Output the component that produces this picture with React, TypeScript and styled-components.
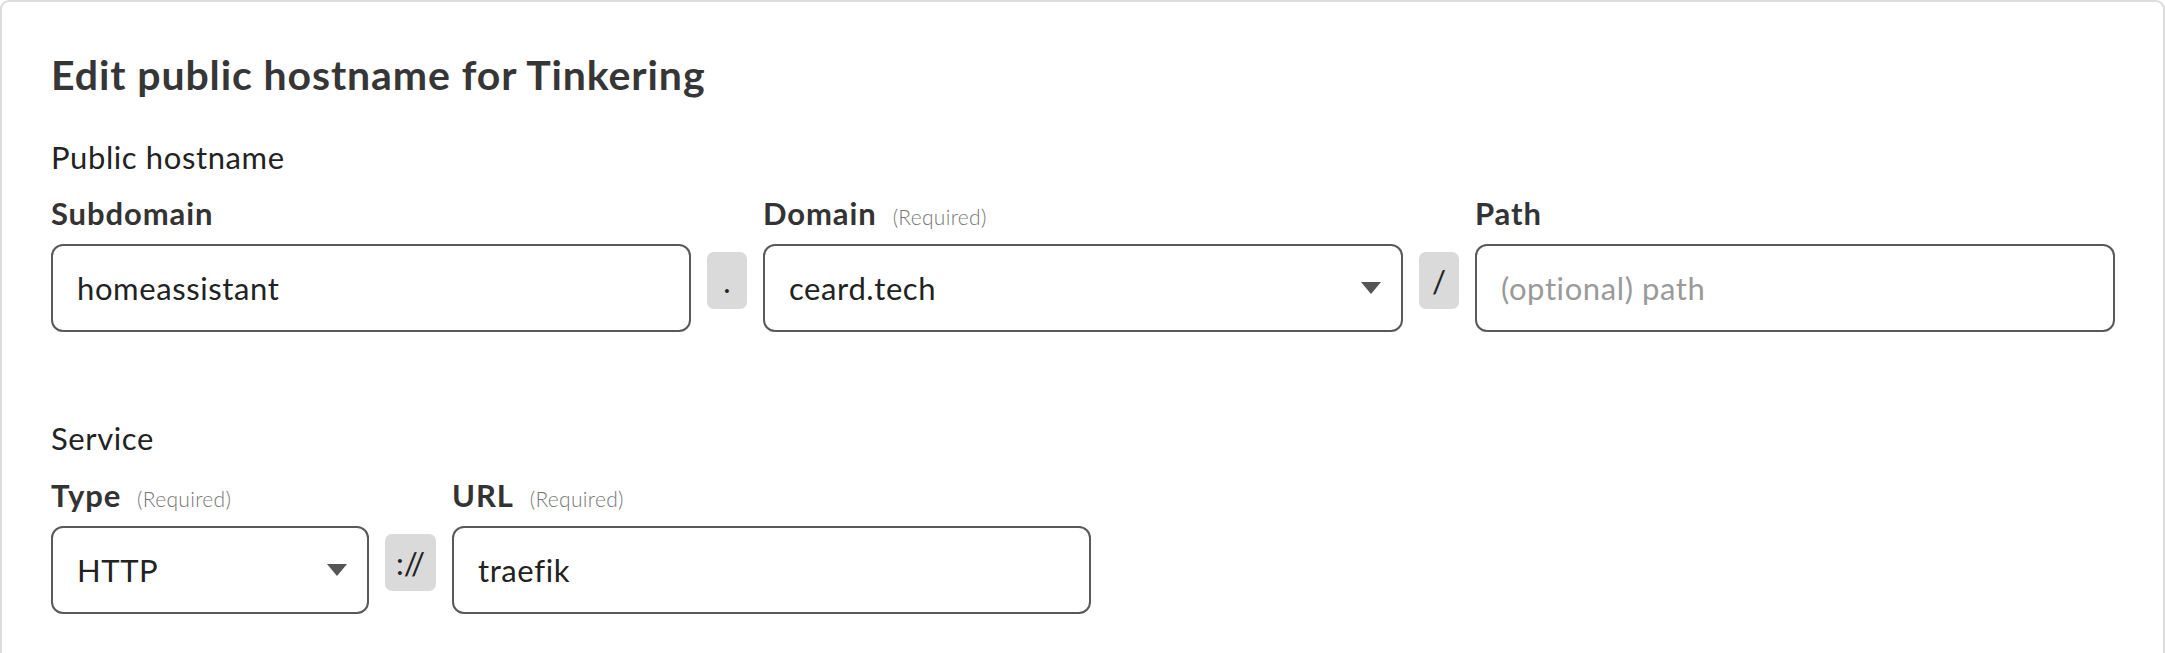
import * as React from "react";
import styled, { createGlobalStyle } from "styled-components";

const GlobalStyle = createGlobalStyle`
  html, body {
    margin: 0;
    padding: 0;
    background: #ffffff;
  }
  body {
    font-family: Lato, "Open Sans", "Liberation Sans", sans-serif;
    color: #222222;
  }
`;

const Card = styled.section`
  box-sizing: border-box;
  width: 2165px;
  min-height: 700px;
  border: 2px solid #dcdcdc;
  border-radius: 9px;
  padding: 49px 48px 0 49px;
  background: #ffffff;
`;

const Title = styled.h1`
  margin: 0 0 40px;
  font-size: 41px;
  line-height: 48px;
  font-weight: 700;
  letter-spacing: 0.9px;
  color: #363636;
`;

const SectionLabel = styled.div<{ $top?: number }>`
  margin-top: ${(p) => p.$top ?? 0}px;
  font-size: 31px;
  line-height: 36px;
  letter-spacing: 0.6px;
  color: #222222;
`;

const Row = styled.div<{ $top: number }>`
  display: flex;
  align-items: flex-end;
  gap: 16px;
  margin-top: ${(p) => p.$top}px;
`;

const Field = styled.div<{ $width?: number }>`
  display: flex;
  flex-direction: column;
  gap: 13px;
  flex: ${(p) => (p.$width ? `0 0 ${p.$width}px` : "1 1 0")};
  min-width: 0;
`;

const LabelLine = styled.div`
  display: flex;
  align-items: baseline;
  gap: 16px;
  height: 36px;
`;

const LabelText = styled.span`
  font-size: 31px;
  line-height: 36px;
  font-weight: 700;
  letter-spacing: 0.9px;
  color: #333333;
`;

const Hint = styled.span`
  font-size: 21px;
  font-weight: 300;
  letter-spacing: 0.3px;
  color: #777777;
`;

const Box = styled.div<{ $placeholder?: boolean }>`
  box-sizing: border-box;
  height: 88px;
  display: flex;
  align-items: center;
  justify-content: space-between;
  padding: 0 20px 0 24px;
  border: 2px solid #595959;
  border-radius: 12px;
  font-size: 31px;
  line-height: 36px;
  letter-spacing: 0.6px;
  color: ${(p) => (p.$placeholder ? "#9a9a9a" : "#222222")};
  background: #ffffff;
`;

const Chip = styled.div<{ $width: number }>`
  align-self: flex-end;
  box-sizing: border-box;
  width: ${(p) => p.$width}px;
  height: 57px;
  margin-bottom: 23px;
  display: flex;
  align-items: center;
  justify-content: center;
  border-radius: 7px;
  background: #dadada;
  font-size: 31px;
  color: #222222;
`;

const Caret = () => (
  <svg width="20" height="12" viewBox="0 0 20 12">
    <path d="M0 0 H20 L10 12 Z" fill="#555555" />
  </svg>
);

function Label({ text, required }: { text: string; required?: boolean }) {
  return (
    <LabelLine>
      <LabelText>{text}</LabelText>
      {required && <Hint>(Required)</Hint>}
    </LabelLine>
  );
}

export default function App() {
  return (
    <>
      <GlobalStyle />
      <Card>
        <Title>Edit public hostname for Tinkering</Title>

        <SectionLabel>Public hostname</SectionLabel>
        <Row $top={20}>
          <Field>
            <Label text="Subdomain" />
            <Box>homeassistant</Box>
          </Field>
          <Chip $width={40}>.</Chip>
          <Field>
            <Label text="Domain" required />
            <Box>
              ceard.tech
              <Caret />
            </Box>
          </Field>
          <Chip $width={40}>/</Chip>
          <Field>
            <Label text="Path" />
            <Box $placeholder>(optional) path</Box>
          </Field>
        </Row>

        <SectionLabel $top={88}>Service</SectionLabel>
        <Row $top={21}>
          <Field $width={318}>
            <Label text="Type" required />
            <Box>
              HTTP
              <Caret />
            </Box>
          </Field>
          <Chip $width={51}>://</Chip>
          <Field $width={639}>
            <Label text="URL" required />
            <Box>traefik</Box>
          </Field>
        </Row>
      </Card>
    </>
  );
}
